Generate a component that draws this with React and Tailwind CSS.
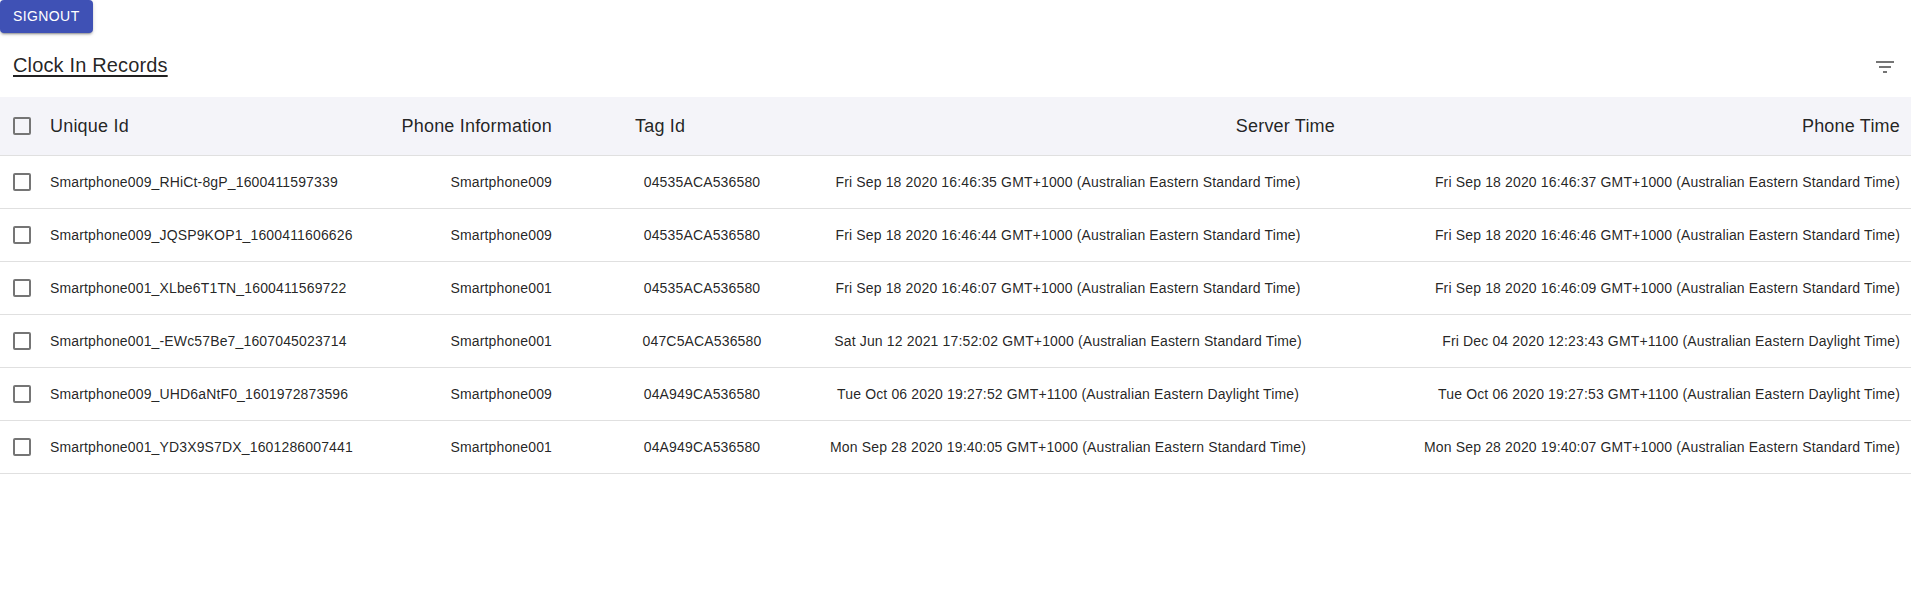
import React from 'react';

const records = [
  {
    id: 'Smartphone009_RHiCt-8gP_1600411597339',
    phone: 'Smartphone009',
    tag: '04535ACA536580',
    server: 'Fri Sep 18 2020 16:46:35 GMT+1000 (Australian Eastern Standard Time)',
    phoneTime: 'Fri Sep 18 2020 16:46:37 GMT+1000 (Australian Eastern Standard Time)',
  },
  {
    id: 'Smartphone009_JQSP9KOP1_1600411606626',
    phone: 'Smartphone009',
    tag: '04535ACA536580',
    server: 'Fri Sep 18 2020 16:46:44 GMT+1000 (Australian Eastern Standard Time)',
    phoneTime: 'Fri Sep 18 2020 16:46:46 GMT+1000 (Australian Eastern Standard Time)',
  },
  {
    id: 'Smartphone001_XLbe6T1TN_1600411569722',
    phone: 'Smartphone001',
    tag: '04535ACA536580',
    server: 'Fri Sep 18 2020 16:46:07 GMT+1000 (Australian Eastern Standard Time)',
    phoneTime: 'Fri Sep 18 2020 16:46:09 GMT+1000 (Australian Eastern Standard Time)',
  },
  {
    id: 'Smartphone001_-EWc57Be7_1607045023714',
    phone: 'Smartphone001',
    tag: '047C5ACA536580',
    server: 'Sat Jun 12 2021 17:52:02 GMT+1000 (Australian Eastern Standard Time)',
    phoneTime: 'Fri Dec 04 2020 12:23:43 GMT+1100 (Australian Eastern Daylight Time)',
  },
  {
    id: 'Smartphone009_UHD6aNtF0_1601972873596',
    phone: 'Smartphone009',
    tag: '04A949CA536580',
    server: 'Tue Oct 06 2020 19:27:52 GMT+1100 (Australian Eastern Daylight Time)',
    phoneTime: 'Tue Oct 06 2020 19:27:53 GMT+1100 (Australian Eastern Daylight Time)',
  },
  {
    id: 'Smartphone001_YD3X9S7DX_1601286007441',
    phone: 'Smartphone001',
    tag: '04A949CA536580',
    server: 'Mon Sep 28 2020 19:40:05 GMT+1000 (Australian Eastern Standard Time)',
    phoneTime: 'Mon Sep 28 2020 19:40:07 GMT+1000 (Australian Eastern Standard Time)',
  },
];

const cols = 'grid grid-cols-[40px_340px_239px_166px_566px_560px] items-center';

const Box = () => (
  <span className="block w-[18px] h-[18px] ml-[13px] border-2 border-[#757575] rounded-[2px]" />
);

const FilterIcon = () => (
  <svg viewBox="0 0 24 24" width="24" height="24" fill="#757575">
    <path d="M10 18h4v-2h-4v2zM3 6v2h18V6H3zm3 7h12v-2H6v2z" />
  </svg>
);

export default function App() {
  return (
    <div className="w-[1911px] min-h-[596px] bg-white font-['Liberation_Sans',Arial,sans-serif] text-[rgba(0,0,0,0.87)]">
      {/* Signout */}
      <button className="h-[33px] px-[13px] bg-[#3f51b5] text-white text-[14px] font-medium tracking-[0.4px] uppercase rounded-[4px] shadow-[0_3px_1px_-2px_rgba(0,0,0,0.2),0_2px_2px_0_rgba(0,0,0,0.14),0_1px_5px_0_rgba(0,0,0,0.12)]">
        Signout
      </button>

      {/* Toolbar */}
      <div className="h-[64px] flex items-center justify-between pl-[13px] pr-[14px]">
        <h6 className="text-[20px] tracking-[0.15px] underline underline-offset-[3px] leading-none">Clock In Records</h6>
        <div className="mt-[4px]">
          <FilterIcon />
        </div>
      </div>

      {/* Header */}
      <div className={`${cols} h-[59px] bg-[#f4f4f9] border-b border-[#e0e0e0] text-[18px] tracking-[0.2px]`}>
        <div><Box /></div>
        <div className="pl-[10px]">Unique Id</div>
        <div className="text-right pr-[67px]">Phone Information</div>
        <div className="pl-[16px]">Tag Id</div>
        <div className="text-right pr-[16px]">Server Time</div>
        <div className="text-right pr-[11px]">Phone Time</div>
      </div>

      {/* Rows */}
      {records.map((r) => (
        <div key={r.id} className={`${cols} h-[53px] border-b border-[#e0e0e0] text-[14px] tracking-[0.15px]`}>
          <div><Box /></div>
          <div className="pl-[10px] whitespace-nowrap">{r.id}</div>
          <div className="text-right pr-[67px]">{r.phone}</div>
          <div className="text-center">{r.tag}</div>
          <div className="text-center whitespace-nowrap">{r.server}</div>
          <div className="text-right pr-[11px] whitespace-nowrap">{r.phoneTime}</div>
        </div>
      ))}
    </div>
  );
}
